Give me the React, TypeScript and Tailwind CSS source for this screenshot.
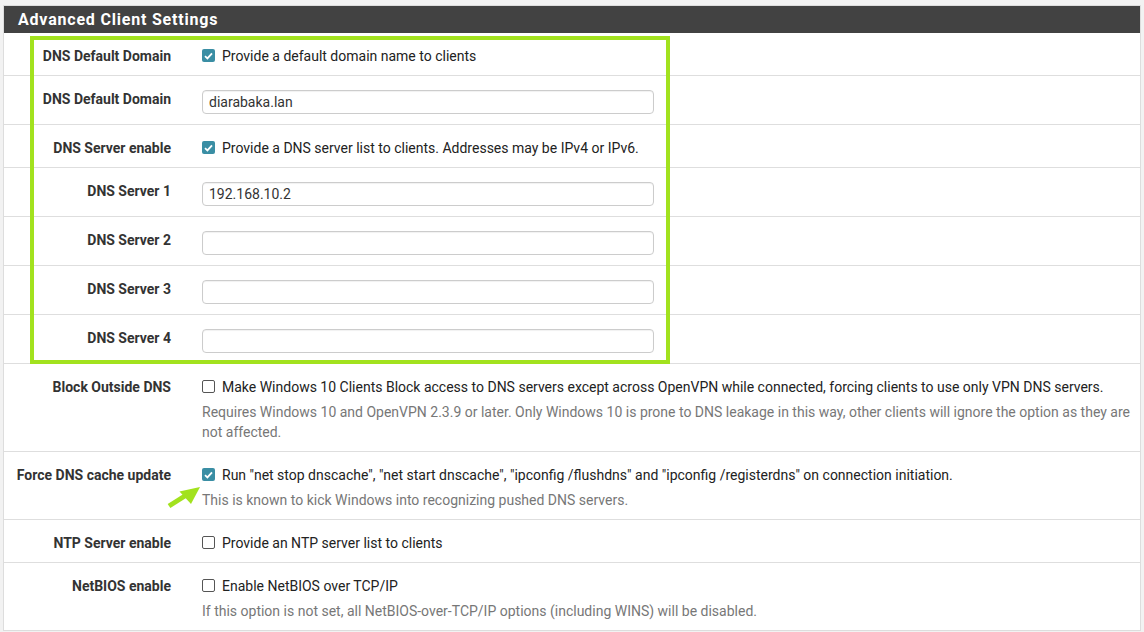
import React from 'react';

const FONT = { fontFamily: 'Roboto, "Liberation Sans", Arial, sans-serif' };

function Check({ checked }: { checked?: boolean }) {
  if (checked) {
    return (
      <span className="mt-[3px] flex h-[13px] w-[13px] shrink-0 items-center justify-center rounded-[2px] bg-[#3a8ea4]">
        <svg width="9" height="8" viewBox="0 0 9 8">
          <path d="M1 4.2 L3.4 6.4 L8 1.3" fill="none" stroke="#fff" strokeWidth="1.8" />
        </svg>
      </span>
    );
  }
  return <span className="mt-[3px] h-[13px] w-[13px] shrink-0 rounded-[2px] border border-[#555] bg-white" />;
}

function Row({ label, children, first }: { label: string; children: React.ReactNode; first?: boolean }) {
  return (
    <div className={`flex ${first ? '' : 'border-t border-[#dedede]'}`}>
      <div className="w-[182px] shrink-0 pr-[15px] pt-[13px] text-right text-[14px] font-bold leading-5 text-[#333]">
        {label}
      </div>
      <div className="min-w-0 flex-1 pl-[16px] pr-[2px]">{children}</div>
    </div>
  );
}

function CheckRow({ label, checked, text, help, first }: { label: string; checked?: boolean; text: string; help?: string; first?: boolean }) {
  return (
    <Row label={label} first={first}>
      <div className="pb-[9px] pt-[13px]">
        <div className="flex gap-[7px] text-[14px] leading-5 text-[#222]">
          <Check checked={checked} />
          <span>{text}</span>
        </div>
        {help && <div className="mt-[5px] text-[14px] leading-5 text-[#777]">{help}</div>}
      </div>
    </Row>
  );
}

function InputRow({ label, value }: { label: string; value?: string }) {
  return (
    <Row label={label}>
      <div className="pb-[10px] pt-[14px]">
        <div className="flex h-[24px] w-[452px] items-center rounded-[4px] border border-[#ccc] bg-white px-[6px] text-[14px] text-[#333] shadow-[inset_0_1px_1px_rgba(0,0,0,0.06)]">
          {value}
        </div>
      </div>
    </Row>
  );
}

export default function App() {
  return (
    <div className="min-h-[632px] bg-[#f2f2f2] px-[3px] pt-[5px]" style={FONT}>
      <div className="relative border border-[#ddd] bg-white">
        <div className="flex h-[27px] items-center bg-[#424242] pl-[14px] text-[16px] font-bold tracking-[0.8px] text-white">
          Advanced Client Settings
        </div>
        <CheckRow first label="DNS Default Domain" checked text="Provide a default domain name to clients" />
        <InputRow label="DNS Default Domain" value="diarabaka.lan" />
        <CheckRow label="DNS Server enable" checked text="Provide a DNS server list to clients. Addresses may be IPv4 or IPv6." />
        <InputRow label="DNS Server 1" value="192.168.10.2" />
        <InputRow label="DNS Server 2" />
        <InputRow label="DNS Server 3" />
        <InputRow label="DNS Server 4" />
        <CheckRow
          label="Block Outside DNS"
          text="Make Windows 10 Clients Block access to DNS servers except across OpenVPN while connected, forcing clients to use only VPN DNS servers."
          help="Requires Windows 10 and OpenVPN 2.3.9 or later. Only Windows 10 is prone to DNS leakage in this way, other clients will ignore the option as they are not affected."
        />
        <CheckRow
          label="Force DNS cache update"
          checked
          text={'Run "net stop dnscache", "net start dnscache", "ipconfig /flushdns" and "ipconfig /registerdns" on connection initiation.'}
          help="This is known to kick Windows into recognizing pushed DNS servers."
        />
        <CheckRow label="NTP Server enable" text="Provide an NTP server list to clients" />
        <CheckRow
          label="NetBIOS enable"
          text="Enable NetBIOS over TCP/IP"
          help="If this option is not set, all NetBIOS-over-TCP/IP options (including WINS) will be disabled."
        />

        {/* annotation overlay */}
        <div className="pointer-events-none absolute left-[26px] top-[30px] h-[328px] w-[640px] border-[4px] border-[#a2e21e]" />
        <svg className="pointer-events-none absolute left-[158px] top-[474px]" width="42" height="32" viewBox="0 0 42 32">
          <path d="M7 26 L26 14" stroke="#a2e21e" strokeWidth="5" strokeLinecap="butt" />
          <path d="M38 7 L17.5 11.5 L29 24 Z" fill="#a2e21e" />
        </svg>
      </div>
    </div>
  );
}
